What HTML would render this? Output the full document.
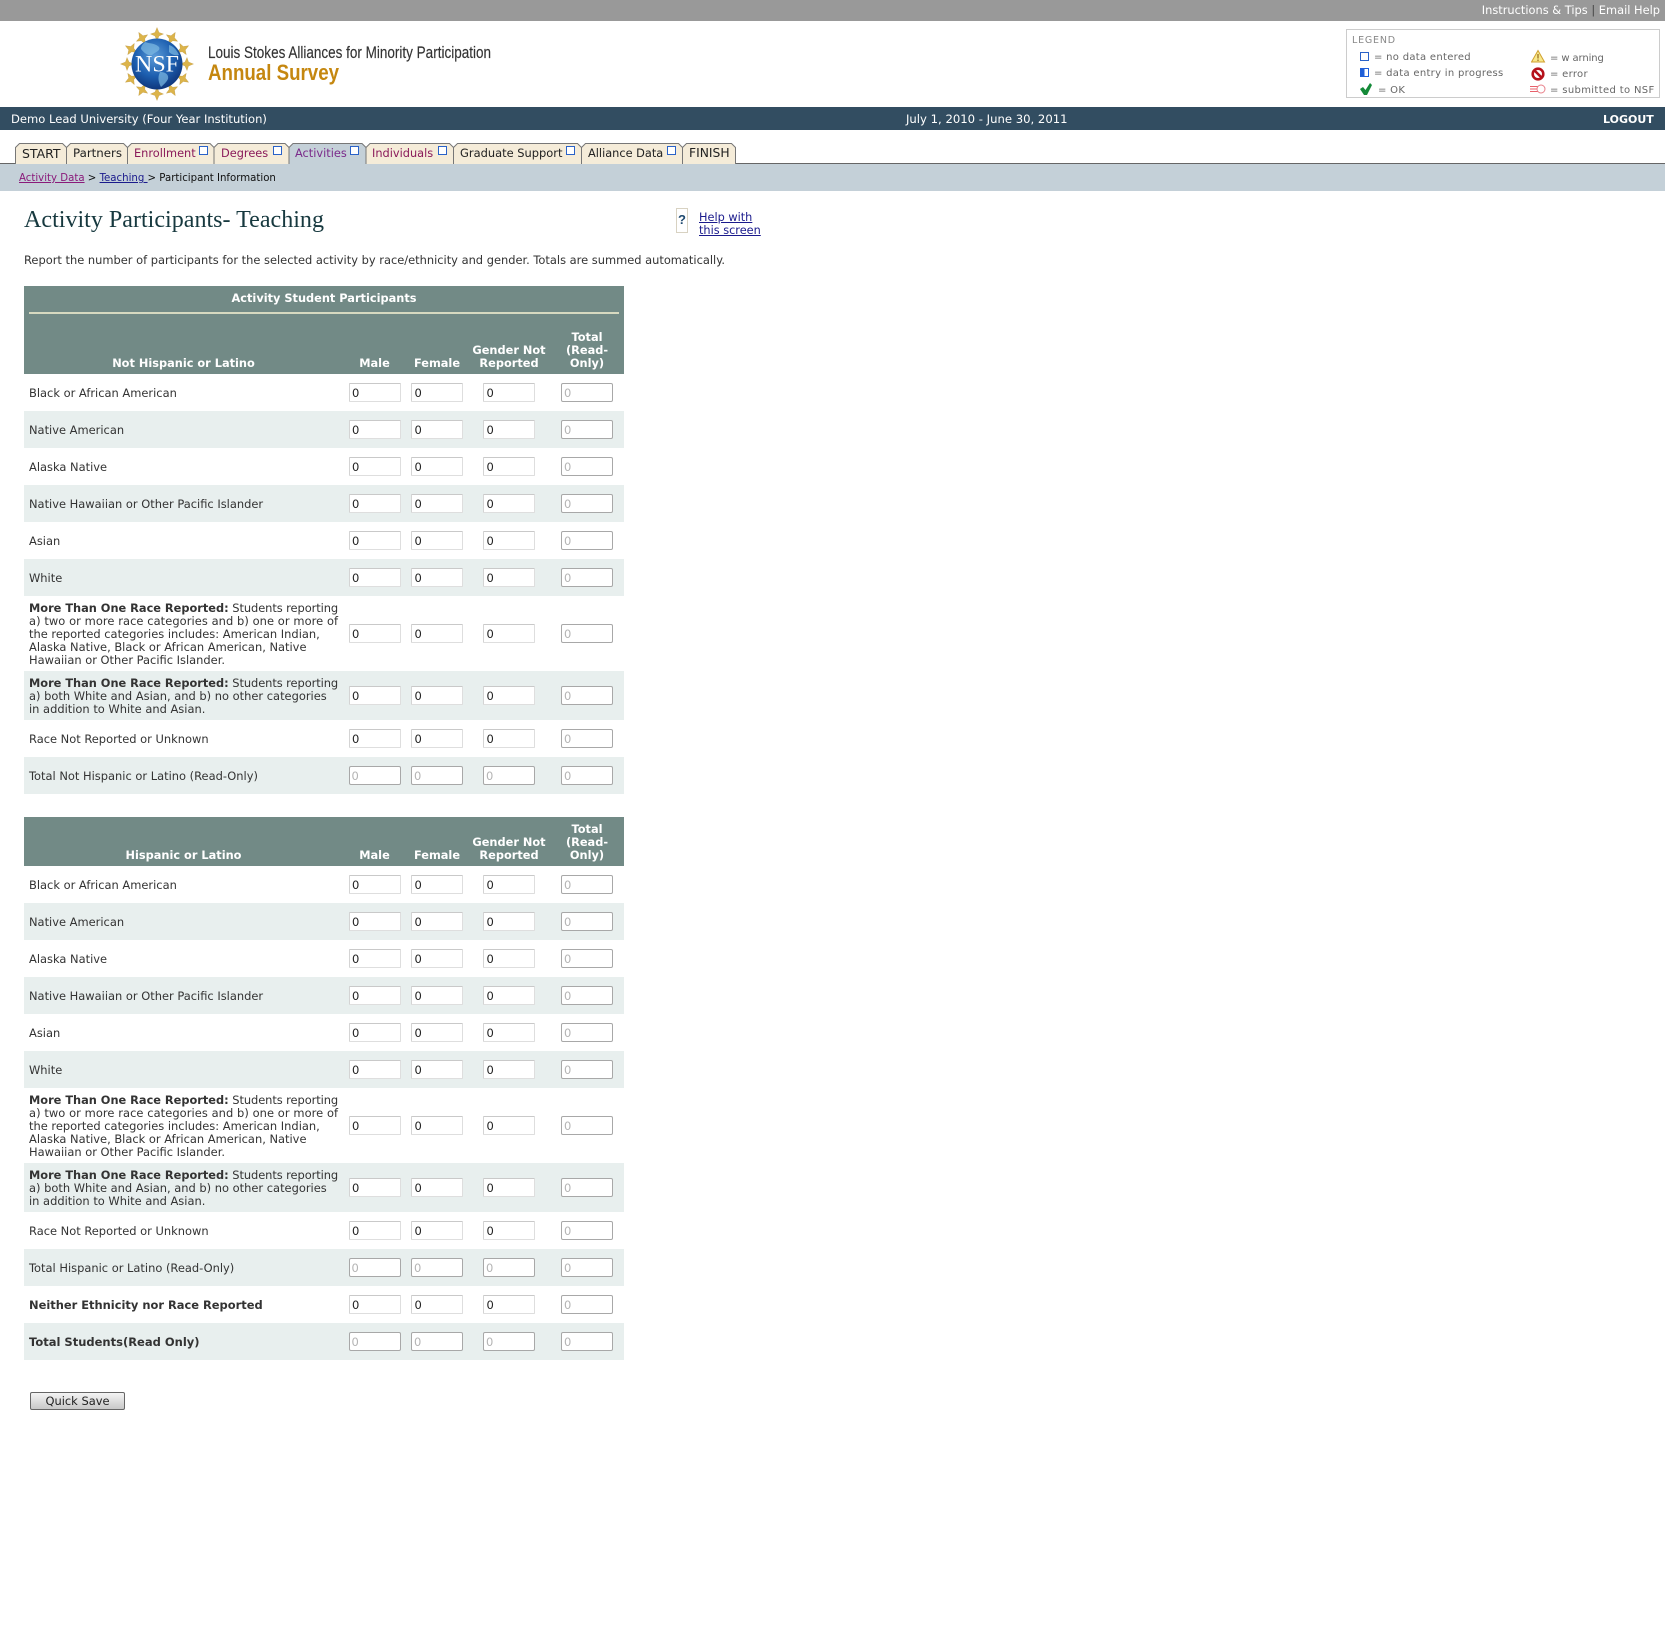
<!DOCTYPE html>
<html lang="en"><head><meta charset="utf-8"><title>Activity Participants- Teaching</title>
<style>
html,body{margin:0;padding:0;background:#fff}
body{width:1673px;height:1640px;position:relative;overflow:hidden;font-family:"DejaVu Sans",Verdana,sans-serif;font-size:11.45px;line-height:13px;color:#333}
.a{position:absolute;white-space:nowrap}
a{text-decoration:underline}
b{font-size:11.35px}
table{position:absolute;left:24px;width:600px;border-collapse:collapse;table-layout:fixed}
td,th{padding:0;text-align:center;vertical-align:middle;overflow:hidden;box-sizing:border-box}
td.l{text-align:left;padding:2px 0 0 5px;white-space:nowrap}
th{background:#728a86;color:#fff;font-weight:bold;font-size:11.35px;vertical-align:bottom;padding-bottom:4px}
tr.r td{height:37px}
tr.m td{height:75px}
tr.n td{height:49px}
tr.s td{background:#e8efee}
input{display:block;margin:0 auto;box-sizing:border-box;width:52px;height:19px;padding:0 0 0 2.5px;background:#fff;border:1px solid #dedede;border-top-color:#c9c9c9;border-left-color:#d4d4d4;font:11.5px "DejaVu Sans",sans-serif;color:#222;border-radius:1px}
input.o{border:1px solid #a8a8a8;color:#b4b4b4;border-radius:2px;padding-left:2px}
.t{font-size:11.35px;top:147px}
.c{position:absolute;width:7px;height:7px;border:1.5px solid #2a62c8;background:#fff;top:146px;box-sizing:content-box}
.lg{font-size:10px;letter-spacing:.3px;color:#666}
</style></head><body>

<div class="a" style="left:0;top:0;width:1665px;height:21px;background:#999"></div>
<div class="a" style="right:13px;top:4px;color:#fff;font-size:11.4px">Instructions &amp; Tips <span style="color:#444">|</span> Email Help</div>

<svg class="a" style="left:118px;top:26px" width="78" height="76" viewBox="-39 -38 78 76">
<defs><radialGradient id="g" cx="45%" cy="35%" r="70%"><stop offset="0" stop-color="#5b9bd8"/><stop offset=".55" stop-color="#1d5fb0"/><stop offset="1" stop-color="#0d2f73"/></radialGradient></defs>
<g fill="#dcb44a" stroke="#b9913a" stroke-width=".3">
<polygon id="s" points="0,-36.500 2,-31.500 6.500,-30 2,-28 0,-23 -2,-28 -6.500,-30 -2,-31.500"/>
<use href="#s" transform="rotate(30)"/><use href="#s" transform="rotate(60)"/><use href="#s" transform="rotate(90)"/><use href="#s" transform="rotate(120)"/><use href="#s" transform="rotate(150)"/><use href="#s" transform="rotate(180)"/><use href="#s" transform="rotate(210)"/><use href="#s" transform="rotate(240)"/><use href="#s" transform="rotate(270)"/><use href="#s" transform="rotate(300)"/><use href="#s" transform="rotate(330)"/>
</g>
<circle r="25.500" fill="url(#g)"/>
<path d="M-12 -22c6 2 10 1 14 5 2 4-4 5-7 8-4 1-8-2-11-6 0-3 2-5 4-7zM3 8c6 0 9 3 8 7-2 4-5 6-7 8-2-4-4-9-1-15zM12-19c4 1 8 5 10 10-3 1-7 0-10-3z" fill="#7fbbe2" opacity=".7"/>
<text x="0" y="7.500" text-anchor="middle" font-family="Liberation Serif,serif" font-size="23" fill="#fff" textLength="44" lengthAdjust="spacingAndGlyphs">NSF</text>
</svg>

<svg class="a" style="left:200px;top:40px" width="310" height="50">
<text x="8" y="18" font-family="Liberation Sans,sans-serif" font-size="16.500" fill="#333" stroke="#333" stroke-width=".15" textLength="283" lengthAdjust="spacingAndGlyphs">Louis Stokes Alliances for Minority Participation</text>
<text x="8" y="40" font-family="Liberation Sans,sans-serif" font-size="22.500" font-weight="bold" fill="#c5870f" textLength="131" lengthAdjust="spacingAndGlyphs">Annual Survey</text>
</svg>

<div class="a" style="left:1346px;top:29px;width:312px;height:67px;border:1px solid #ccc"></div>
<div class="a" style="left:1352px;top:34px;font-size:9.5px;letter-spacing:.8px;color:#888">LEGEND</div>
<div class="a" style="left:1360px;top:52px;width:7px;height:7px;border:1.500px solid #2a62c8"></div>
<div class="a lg" style="left:1374px;top:51px">= no data entered</div>
<div class="a" style="left:1360px;top:68px;width:7px;height:7px;border:1.500px solid #1f5fd8;background:linear-gradient(90deg,#1f5fd8 50%,#fff 50%)"></div>
<div class="a lg" style="left:1374px;top:67px">= data entry in progress</div>
<svg class="a" style="left:1360px;top:83px" width="12" height="12" viewBox="0 0 12 12"><path d="M0 6L3 4L5.500 7L10 0L12 2L7 12H4Z" fill="#148a38"/></svg>
<div class="a lg" style="left:1378px;top:84px">= OK</div>
<svg class="a" style="left:1531px;top:49px" width="15" height="14" viewBox="0 0 15 14"><path d="M7 1.500L13.500 13H.5z" fill="#f8e88a" stroke="#d0a030"/><path d="M7 5v4.500M7 10.500v1.500" stroke="#8a5a10" stroke-width="1.100"/></svg>
<div class="a lg" style="left:1550px;top:52px;letter-spacing:-.1px">= w arning</div>
<svg class="a" style="left:1531px;top:67px" width="14" height="14" viewBox="0 0 14 14"><circle cx="7" cy="7" r="5.300" fill="#fff" stroke="#b5121b" stroke-width="2.600"/><path d="M3.500 3.500l7 7" stroke="#b5121b" stroke-width="2.600"/></svg>
<div class="a lg" style="left:1550px;top:68px">= error</div>
<svg class="a" style="left:1529px;top:83px" width="17" height="12" viewBox="0 0 17 12"><path d="M1 3.500h8M1 6h8M1 8.500h8" stroke="#e8606a"/><circle cx="12" cy="6" r="4" fill="#fff" stroke="#e8808a"/></svg>
<div class="a lg" style="left:1550px;top:84px;letter-spacing:.35px">= submitted to NSF</div>

<div class="a" style="left:0;top:107px;width:1665px;height:23px;background:#324d61"></div>
<div class="a" style="left:11px;top:113px;color:#fff;font-size:11.55px">Demo Lead University (Four Year Institution)</div>
<div class="a" style="left:906px;top:113px;color:#fff;font-size:11.65px">July 1, 2010 - June 30, 2011</div>
<div class="a" style="left:1603px;top:113px;color:#fff;font-weight:bold;font-size:11px">LOGOUT</div>

<div class="a" style="left:0;top:164px;width:1665px;height:27px;background:#c4d0d8"></div>
<svg class="a" style="left:0;top:140px" width="1665" height="26">
<path d="M0 23.500H1665" stroke="#666" fill="none"/>
<g stroke="#777" fill="#f5ecd9">
<path d="M15.500 24V7.500L19.500 3.500H62.500L66.500 7.500V24"/>
<path d="M66.500 24V7.500L70.500 3.500H123.500L127.500 7.500V24"/>
<path d="M127.500 24V7.500L131.500 3.500H210L214 7.500V24"/>
<path d="M214 24V7.500L218 3.500H285L289 7.500V24"/>
<path d="M289 24V7.500L293 3.500H362L366 7.500V24" fill="#c4d0d8"/>
<path d="M366 24V7.500L370 3.500H449.500L453.500 7.500V24"/>
<path d="M453.500 24V7.500L457.500 3.500H577.500L581.500 7.500V24"/>
<path d="M581.500 24V7.500L585.500 3.500H678.500L682.500 7.500V24"/>
<path d="M682.500 24V7.500L686.500 3.500H731.500L735.500 7.500V24"/>
</g>
<path d="M289.500 23.500H365.500" stroke="#c4d0d8" fill="none"/>
</svg>
<div class="a t" style="left:22px;color:#222;font-size:12.500px">START</div>
<div class="a t" style="left:73px;color:#222;font-size:11.800px">Partners</div>
<div class="a t" style="left:134px;color:#8a1a5a">Enrollment</div><div class="c" style="left:199px"></div>
<div class="a t" style="left:221px;color:#8a1a5a">Degrees</div><div class="c" style="left:273px"></div>
<div class="a t" style="left:295px;color:#7a2a8a">Activities</div><div class="c" style="left:350px"></div>
<div class="a t" style="left:372px;color:#8a1a5a">Individuals</div><div class="c" style="left:438px"></div>
<div class="a t" style="left:460px;color:#222;font-size:11.450px">Graduate Support</div><div class="c" style="left:566px"></div>
<div class="a t" style="left:588px;color:#222">Alliance Data</div><div class="c" style="left:667px"></div>
<div class="a t" style="left:689px;color:#222;font-size:12.300px">FINISH</div>

<div class="a" style="left:19px;top:172px;font-size:10.180px;color:#111"><a style="color:#8a1a7a">Activity Data</a> &gt; <a style="color:#1a1a8c">Teaching </a>&gt; Participant Information</div>

<svg class="a" style="left:20px;top:200px" width="320" height="36"><text x="4" y="27" font-family="Liberation Serif,serif" font-size="24" fill="#17393f" textLength="300" lengthAdjust="spacingAndGlyphs">Activity Participants- Teaching</text></svg>

<div class="a" style="left:676px;top:208px;width:10px;height:23px;border:1px solid #d8d2c2;color:#1f4a70;font:bold 13px/22px &quot;Liberation Sans&quot;,sans-serif;text-align:center">?</div>
<div class="a" style="left:699px;top:211px;font-size:11.300px"><a style="color:#1a1a8c">Help with</a><br><a style="color:#1a1a8c">this screen</a></div>

<div class="a" style="left:24px;top:254px;font-size:11.430px">Report the number of participants for the selected activity by race/ethnicity and gender. Totals are summed automatically.</div>

<table style="top:286px">
<colgroup><col style="width:319px"><col style="width:63px"><col style="width:62px"><col style="width:82px"><col style="width:74px"></colgroup>
<tr><th colspan="5" style="height:26px;vertical-align:middle;padding:0 0 2px">Activity Student Participants</th></tr>
<tr><th colspan="5" style="height:2px;padding:0 5px"><div style="height:2px;background:#d7d9c0"></div></th></tr>
<tr><th style="height:60px">Not Hispanic or Latino</th><th>Male</th><th>Female</th><th>Gender Not<br>Reported</th><th>Total<br>(Read-<br>Only)</th></tr>
<tr class="r"><td class="l">Black or African American</td><td><input value="0"></td><td><input value="0"></td><td><input value="0"></td><td><input class="o" value="0"></td></tr>
<tr class="r s"><td class="l">Native American</td><td><input value="0"></td><td><input value="0"></td><td><input value="0"></td><td><input class="o" value="0"></td></tr>
<tr class="r"><td class="l">Alaska Native</td><td><input value="0"></td><td><input value="0"></td><td><input value="0"></td><td><input class="o" value="0"></td></tr>
<tr class="r s"><td class="l">Native Hawaiian or Other Pacific Islander</td><td><input value="0"></td><td><input value="0"></td><td><input value="0"></td><td><input class="o" value="0"></td></tr>
<tr class="r"><td class="l">Asian</td><td><input value="0"></td><td><input value="0"></td><td><input value="0"></td><td><input class="o" value="0"></td></tr>
<tr class="r s"><td class="l">White</td><td><input value="0"></td><td><input value="0"></td><td><input value="0"></td><td><input class="o" value="0"></td></tr>
<tr class="m"><td class="l"><b>More Than One Race Reported:</b> <span style="letter-spacing:-.08px">Students reporting</span><br><span style="letter-spacing:.07px">a) two or more race categories and b) one or more of</span><br>the reported categories includes: American Indian,<br>Alaska Native, Black or African American, Native<br>Hawaiian or Other Pacific Islander.</td><td><input value="0"></td><td><input value="0"></td><td><input value="0"></td><td><input class="o" value="0"></td></tr>
<tr class="n s"><td class="l"><b>More Than One Race Reported:</b> <span style="letter-spacing:-.08px">Students reporting</span><br>a) both White and Asian, and b) no other categories<br>in addition to White and Asian.</td><td><input value="0"></td><td><input value="0"></td><td><input value="0"></td><td><input class="o" value="0"></td></tr>
<tr class="r"><td class="l">Race Not Reported or Unknown</td><td><input value="0"></td><td><input value="0"></td><td><input value="0"></td><td><input class="o" value="0"></td></tr>
<tr class="r s"><td class="l">Total Not Hispanic or Latino (Read-Only)</td><td><input class="o" value="0"></td><td><input class="o" value="0"></td><td><input class="o" value="0"></td><td><input class="o" value="0"></td></tr>
</table>

<table style="top:817px">
<colgroup><col style="width:319px"><col style="width:63px"><col style="width:62px"><col style="width:82px"><col style="width:74px"></colgroup>
<tr><th style="height:49px">Hispanic or Latino</th><th>Male</th><th>Female</th><th>Gender Not<br>Reported</th><th>Total<br>(Read-<br>Only)</th></tr>
<tr class="r"><td class="l">Black or African American</td><td><input value="0"></td><td><input value="0"></td><td><input value="0"></td><td><input class="o" value="0"></td></tr>
<tr class="r s"><td class="l">Native American</td><td><input value="0"></td><td><input value="0"></td><td><input value="0"></td><td><input class="o" value="0"></td></tr>
<tr class="r"><td class="l">Alaska Native</td><td><input value="0"></td><td><input value="0"></td><td><input value="0"></td><td><input class="o" value="0"></td></tr>
<tr class="r s"><td class="l">Native Hawaiian or Other Pacific Islander</td><td><input value="0"></td><td><input value="0"></td><td><input value="0"></td><td><input class="o" value="0"></td></tr>
<tr class="r"><td class="l">Asian</td><td><input value="0"></td><td><input value="0"></td><td><input value="0"></td><td><input class="o" value="0"></td></tr>
<tr class="r s"><td class="l">White</td><td><input value="0"></td><td><input value="0"></td><td><input value="0"></td><td><input class="o" value="0"></td></tr>
<tr class="m"><td class="l"><b>More Than One Race Reported:</b> <span style="letter-spacing:-.08px">Students reporting</span><br><span style="letter-spacing:.07px">a) two or more race categories and b) one or more of</span><br>the reported categories includes: American Indian,<br>Alaska Native, Black or African American, Native<br>Hawaiian or Other Pacific Islander.</td><td><input value="0"></td><td><input value="0"></td><td><input value="0"></td><td><input class="o" value="0"></td></tr>
<tr class="n s"><td class="l"><b>More Than One Race Reported:</b> <span style="letter-spacing:-.08px">Students reporting</span><br>a) both White and Asian, and b) no other categories<br>in addition to White and Asian.</td><td><input value="0"></td><td><input value="0"></td><td><input value="0"></td><td><input class="o" value="0"></td></tr>
<tr class="r"><td class="l">Race Not Reported or Unknown</td><td><input value="0"></td><td><input value="0"></td><td><input value="0"></td><td><input class="o" value="0"></td></tr>
<tr class="r s"><td class="l">Total Hispanic or Latino (Read-Only)</td><td><input class="o" value="0"></td><td><input class="o" value="0"></td><td><input class="o" value="0"></td><td><input class="o" value="0"></td></tr>
<tr class="r"><td class="l"><b style="font-size:11.450px">Neither Ethnicity nor Race Reported</b></td><td><input value="0"></td><td><input value="0"></td><td><input value="0"></td><td><input class="o" value="0"></td></tr>
<tr class="r s"><td class="l"><b style="font-size:11.500px">Total Students(Read Only)</b></td><td><input class="o" value="0"></td><td><input class="o" value="0"></td><td><input class="o" value="0"></td><td><input class="o" value="0"></td></tr>
</table>

<div class="a" style="left:30px;top:1392px;width:95px;height:18px;box-sizing:border-box;border:1px solid #666;border-radius:2px;background:linear-gradient(#f4f4f4,#c8c8c8);color:#222;text-align:center;line-height:16px">Quick Save</div>
</body></html>
